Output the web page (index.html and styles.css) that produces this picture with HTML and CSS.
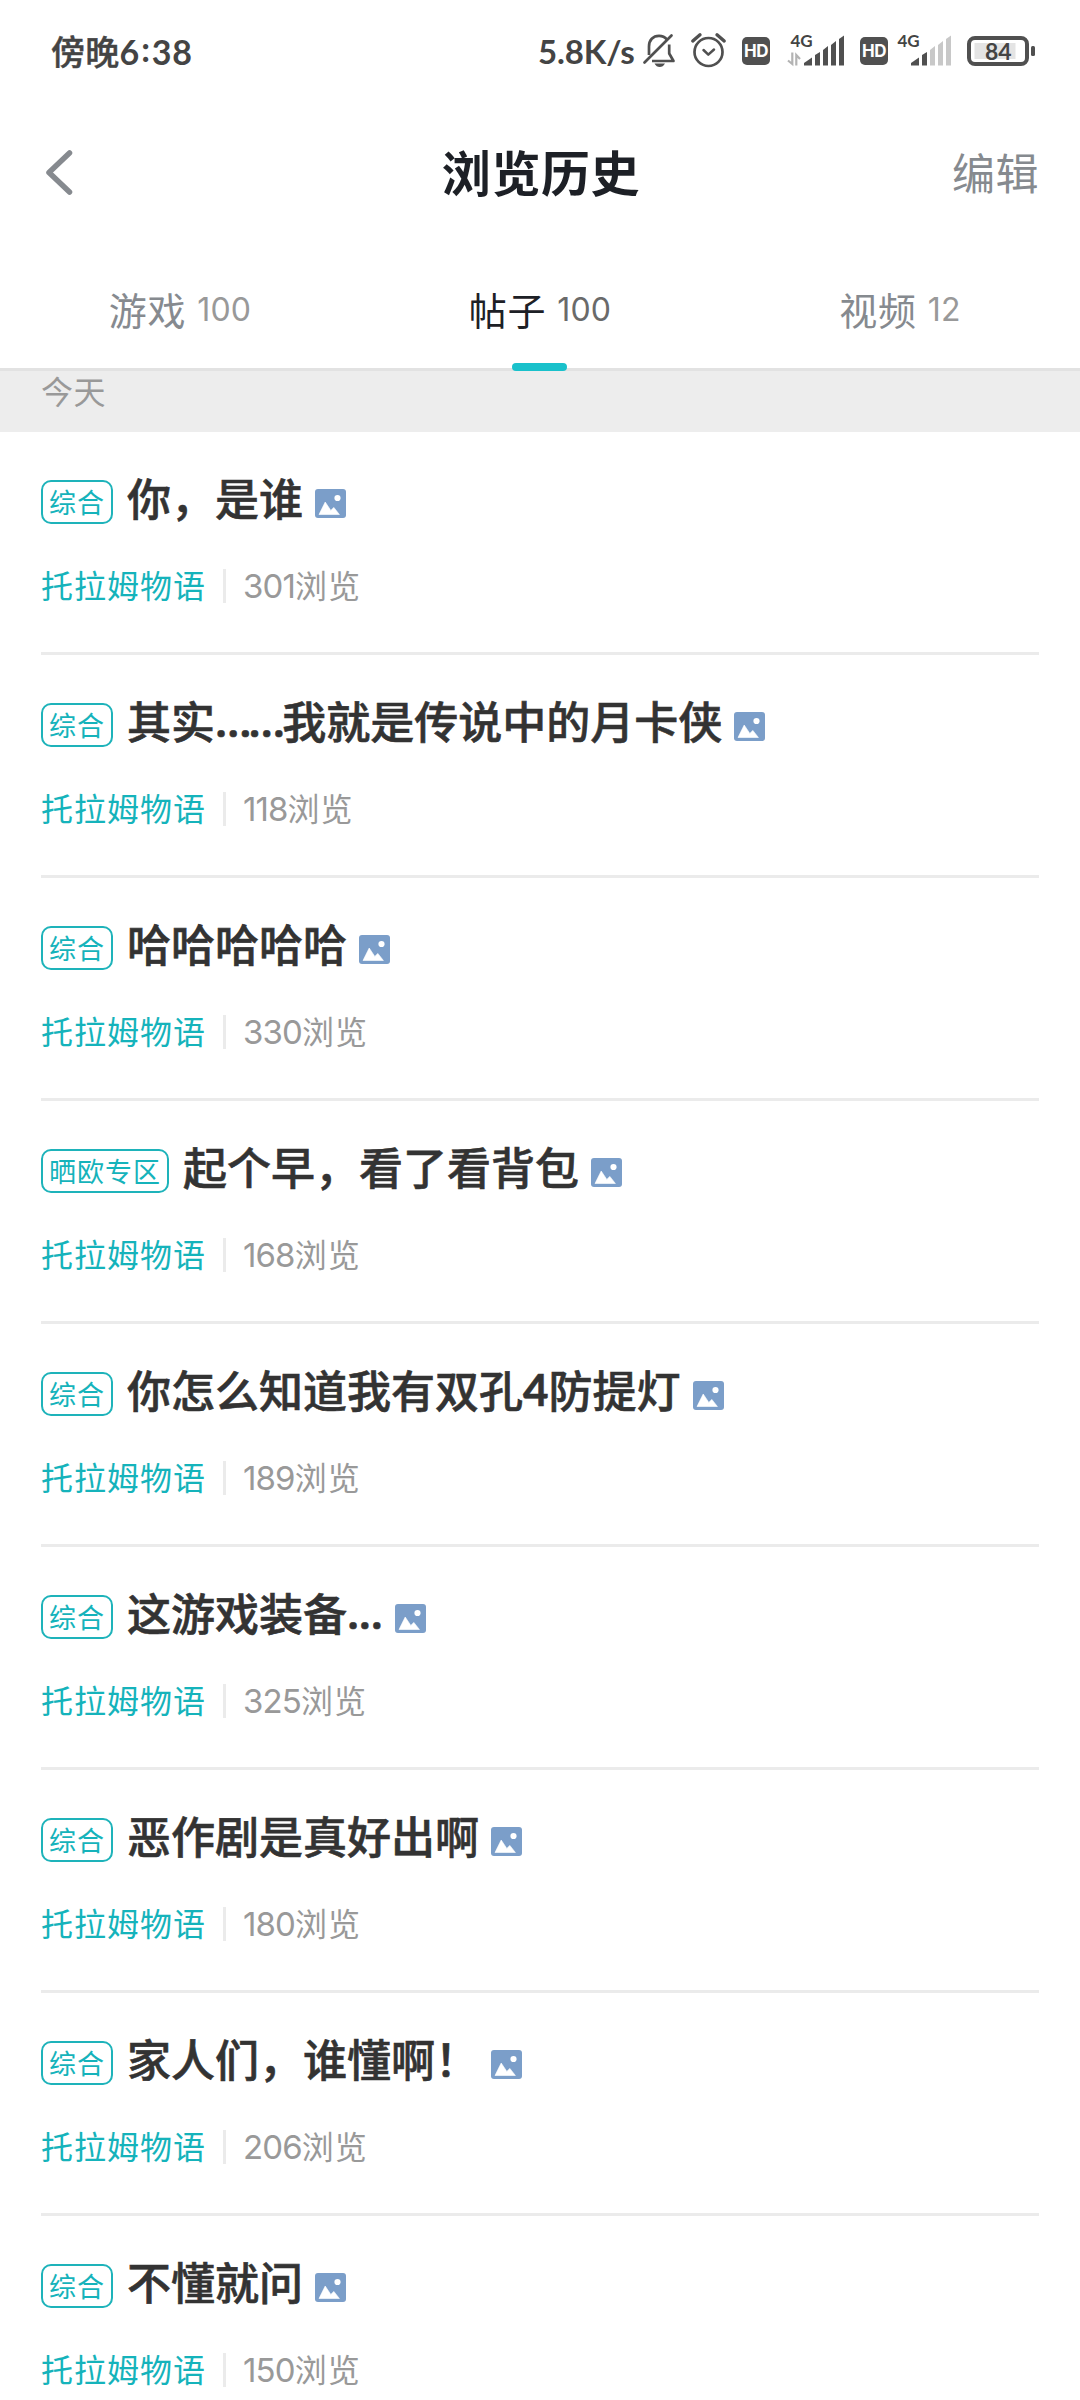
FILE: index.html
```html
<!DOCTYPE html>
<html lang="zh-CN">
<head>
<meta charset="utf-8">
<title>浏览历史</title>
<link rel="stylesheet" href="styles.css">
</head>
<body>
<svg class="defs" width="0" height="0">
  <symbol id="pic" viewBox="0 0 31 29">
    <rect width="31" height="29" rx="3" fill="#7b9ec9"/>
    <path d="M4 25.500 10.200 13 15.800 21.400 18.800 18.400 24.400 25.500Z" fill="#fff" stroke="#fff" stroke-width=".6" stroke-linejoin="round"/>
    <circle cx="22.500" cy="9" r="3.100" fill="#fff"/>
  </symbol>
</svg>
<header class="status">
  <span class="time">傍晚<b>6<span class="colon">:</span>38</b></span>
  <div class="tray">
    <span class="speed">5.8K/s</span>
    <svg class="bell" width="33" height="35" viewBox="0 0 33 35" fill="none" stroke="#505050" stroke-width="2.700">
      <path d="M6 22V13.500C6 7 10 2.800 16 2.800C19.500 2.800 22 4 23.800 6.300M26.200 11.500V20.500L30.500 28H9" stroke-linejoin="round"/>
      <path d="M1.500 29.500 28.500 2.500" stroke-linecap="round"/>
      <path d="M11.500 30.500H22Q20 34 16.700 34T11.500 30.500Z" fill="#505050" stroke="none"/>
    </svg>
    <svg class="alarm" width="35" height="35" viewBox="0 0 35 35" fill="none" stroke="#505050" stroke-width="2.700">
      <circle cx="17.500" cy="19" r="14"/>
      <path d="M12.500 17 17.300 21.700 23 16.500" stroke-linecap="round" stroke-linejoin="round" stroke-width="2.500"/>
      <path d="M1.800 8 9 1.800M33.200 8 26 1.800" stroke-linecap="round" stroke-width="3.400"/>
    </svg>
    <span class="hd">HD</span>
    <svg class="signal" width="57" height="33" viewBox="0 0 57 33">
      <text x="2.500" y="13.500" class="net">4G</text>
      <path d="M0 27.500 4.300 31V19.500M8.300 32.500V22L12 26" stroke="#b3b3b3" stroke-width="2.200" fill="none"/>
      <g fill="#505050"><path d="M16 32.500V30L24 24.500V32.500Z"/><path d="M27 32.500V22L32 19V32.500Z"/><path d="M35 32.500V17L40 13V32.500Z"/><path d="M43 32.500V12L48 8V32.500Z"/><path d="M51 32.500V6L56 2.500V32.500Z"/></g>
    </svg>
    <span class="hd hd-second">HD</span>
    <svg class="signal-weak" width="57" height="33" viewBox="0 0 57 33">
      <text x="2.500" y="13.500" class="net">4G</text>
      <g fill="#505050"><path d="M16 32.500V30L24 24.500V32.500Z"/><path d="M27 32.500V22L32 19V32.500Z"/></g>
      <g fill="#c8c8c8"><path d="M35 32.500V17L40 13V32.500Z"/><path d="M43 32.500V12L48 8V32.500Z"/><path d="M51 32.500V6L56 2.500V32.500Z"/></g>
    </svg>
    <svg class="battery" width="69" height="30" viewBox="0 0 69 30">
      <rect x="2" y="2" width="58" height="26" rx="6" fill="#fff" stroke="#505050" stroke-width="4"/>
      <rect x="7.500" y="7" width="41" height="16" fill="#e4e4e4"/>
      <rect x="64" y="10" width="4" height="10" rx="1.500" fill="#505050"/>
      <text x="31.300" y="23.500" text-anchor="middle" class="charge">84</text>
    </svg>
  </div>
</header>
<nav class="bar">
  <svg class="back" width="30" height="50" viewBox="0 0 30 50" fill="none" stroke="#868a8f" stroke-width="5.500" stroke-linecap="round" stroke-linejoin="round"><path d="M24.500 5 4 24.500 24.500 44"/></svg>
  <h1>浏览历史</h1>
  <a class="edit">编辑</a>
</nav>
<div class="tabs">
  <div class="tab">游戏<span class="count">100</span></div>
  <div class="tab active">帖子<span class="count">100</span></div>
  <div class="tab">视频<span class="count">12</span></div>
</div>
<div class="day">今天</div>
<main class="list">
  <article><h2><span class="tag">综合</span>你，是谁<svg class="pic"><use href="#pic"/></svg></h2><p><span class="game">托拉姆物语</span><span class="views"><i>301</i>浏览</span></p></article>
  <article><h2><span class="tag">综合</span>其实<span class="dots">……</span>我就是传说中的月卡侠<svg class="pic"><use href="#pic"/></svg></h2><p><span class="game">托拉姆物语</span><span class="views"><i>118</i>浏览</span></p></article>
  <article><h2><span class="tag">综合</span>哈哈哈哈哈<svg class="pic"><use href="#pic"/></svg></h2><p><span class="game">托拉姆物语</span><span class="views"><i>330</i>浏览</span></p></article>
  <article><h2><span class="tag">晒欧专区</span>起个早，看了看背包<svg class="pic"><use href="#pic"/></svg></h2><p><span class="game">托拉姆物语</span><span class="views"><i>168</i>浏览</span></p></article>
  <article><h2><span class="tag">综合</span>你怎么知道我有双孔<span class="num">4</span>防提灯<svg class="pic"><use href="#pic"/></svg></h2><p><span class="game">托拉姆物语</span><span class="views"><i>189</i>浏览</span></p></article>
  <article><h2><span class="tag">综合</span>这游戏装备<span class="dots periods">...</span><svg class="pic"><use href="#pic"/></svg></h2><p><span class="game">托拉姆物语</span><span class="views"><i>325</i>浏览</span></p></article>
  <article><h2><span class="tag">综合</span>恶作剧是真好出啊<svg class="pic"><use href="#pic"/></svg></h2><p><span class="game">托拉姆物语</span><span class="views"><i>180</i>浏览</span></p></article>
  <article><h2><span class="tag">综合</span>家人们，谁懂啊！<svg class="pic"><use href="#pic"/></svg></h2><p><span class="game">托拉姆物语</span><span class="views"><i>206</i>浏览</span></p></article>
  <article><h2><span class="tag">综合</span>不懂就问<svg class="pic"><use href="#pic"/></svg></h2><p><span class="game">托拉姆物语</span><span class="views"><i>150</i>浏览</span></p></article>
</main>
</body>
</html>
```
FILE: styles.css
```css
* { box-sizing: border-box; margin: 0; padding: 0; }
html, body { height: 2400px; overflow: hidden; }
body { width: 1080px; background: #fff; font-family: "Noto Sans CJK SC", sans-serif; white-space: nowrap; }
svg { display: block; flex: none; overflow: visible; }
.defs { display: none; }

.status { height: 102px; padding-left: 51px; display: flex; justify-content: space-between; color: #444; }
.time { height: 101px; line-height: 101px; font-size: 34px; font-weight: 500; letter-spacing: .3px; -webkit-text-stroke: .4px #444; }
.time b { font-family: Lato, sans-serif; font-size: 34px; font-weight: 700; letter-spacing: .8px; -webkit-text-stroke: 0; }
.colon { display: inline-block; line-height: 1; padding: 0 1px; transform: translateY(-3px); }
.tray { display: flex; width: 542px; align-items: flex-start; padding-top: 33px; }
.speed { width: 105px; height: 38px; font: 700 33px/36px Lato, sans-serif; letter-spacing: -.1px; }
.alarm { margin-left: 15px; }
.hd { flex: none; width: 28px; height: 28px; margin: 4px 0 0 16px; border-radius: 5px; background: #505050; color: #fff; font: 700 17px/29px Inter, sans-serif; text-align: center; letter-spacing: -.5px; }
.signal { margin: 0 0 0 18px; }
.hd-second { margin-left: 15px; }
.signal-weak { margin-left: 7px; }
.battery { margin: 3px 0 0 15px; }
.net { font: 700 17px Lato, sans-serif; fill: #444; }
.charge { font: 700 23px Lato, sans-serif; fill: #444; }

.bar { height: 142px; padding: 0 43px 0 45px; display: grid; grid-template-columns: 1fr auto 1fr; align-items: center; }
.bar h1 { margin-bottom: 5px; font-size: 49px; font-weight: 700; color: #1d2026; line-height: 70px; letter-spacing: .6px; }
.edit { justify-self: end; margin: 0 -2px 4px 0; font-size: 43px; color: #868a8f; line-height: 60px; letter-spacing: .5px; }

.tabs { height: 127px; display: grid; grid-template-columns: repeat(3, 1fr); border-bottom: 3px solid #e2e2e2; }
.tab { position: relative; display: flex; justify-content: center; align-items: center; gap: 11px; height: 129px; font-size: 38px; color: #868a8f; letter-spacing: .7px; }
.count { padding-top: 2px; font: 400 32px Inter, sans-serif; letter-spacing: .2px; color: #999; }
.active { color: #1d2026; }
.active .count { color: #6a6a6a; }
.active::after { content: ""; position: absolute; left: 152px; top: 119px; width: 55px; height: 8px; border-radius: 4px; background: #19c1cb; }

.day { height: 61px; padding-left: 41px; background: #ededed; color: #999; font-size: 32px; line-height: 39px; letter-spacing: .6px; }
.list { padding: 0 41px; }
.list article { height: 223px; border-bottom: 3px solid #ebebeb; padding-top: 36px; }
h2 { display: flex; align-items: center; height: 58px; font-size: 44px; font-weight: 500; color: #333; -webkit-text-stroke: .6px #333; }
.tag { height: 44px; margin: 10px 14px 0 0; padding: 0 6px; border: 2px solid #1eb3ba; border-radius: 10px; color: #15b3bb; font-size: 27px; font-weight: 400; line-height: 40px; letter-spacing: 1px; -webkit-text-stroke: 0; }
.pic { width: 31px; height: 29px; margin: 13px 0 0 12px; }
.dots { font-family: "Noto Sans", sans-serif; font-weight: 600; letter-spacing: -3px; }
.periods { letter-spacing: -.3px; }
.num { font: 700 44px Lato, sans-serif; }
p { display: flex; align-items: center; height: 34px; margin-top: 43px; font-size: 32px; line-height: 32px; }
.game { height: 34px; line-height: 31px; color: #15b3bb; letter-spacing: 1px; padding-right: 17px; border-right: 3px solid #ebebeb; }
.views { height: 34px; line-height: 31px; color: #999; padding-left: 17px; letter-spacing: 1px; }
.views i { font: 400 33px/31px Inter, sans-serif; letter-spacing: -.9px; }
```
